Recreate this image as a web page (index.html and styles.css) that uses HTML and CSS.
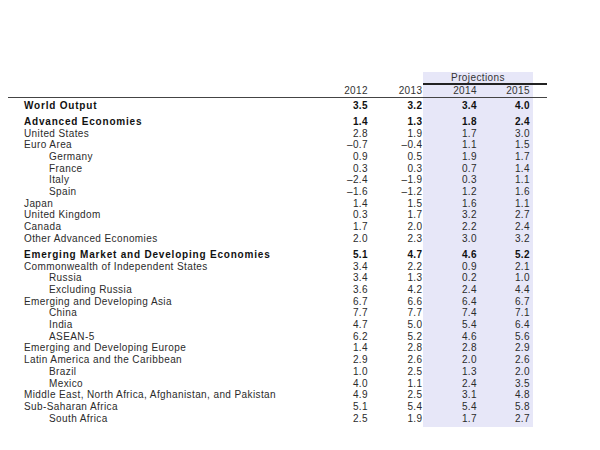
FILE: index.html
```html
<!DOCTYPE html>
<html lang="en">
<head>
<meta charset="utf-8">
<title>World Economic Outlook Projections</title>
<link rel="stylesheet" href="styles.css">
</head>
<body>
<div class="page">
<table class="weo">
  <colgroup>
    <col class="c-label"><col class="c-y12"><col class="c-y13"><col class="c-y14"><col class="c-y15"><col class="c-tail">
  </colgroup>
  <thead>
    <tr class="h-proj">
      <th></th><th></th><th></th>
      <th colspan="2" class="proj shade">Projections</th>
      <th class="proj-tail"></th>
    </tr>
    <tr class="h-years">
      <th></th>
      <th class="num y12">2012</th>
      <th class="num y13">2013</th>
      <th class="num y14 shade">2014</th>
      <th class="num y15 shade">2015</th>
      <th></th>
    </tr>
  </thead>
  <tbody>
    <tr class="bold first"><td class="lab">World Output</td><td class="num y12">3.5</td><td class="num y13">3.2</td><td class="num y14 shade">3.4</td><td class="num y15 shade">4.0</td><td></td></tr>
    <tr class="bold gap"><td class="lab">Advanced Economies</td><td class="num y12">1.4</td><td class="num y13">1.3</td><td class="num y14 shade">1.8</td><td class="num y15 shade">2.4</td><td></td></tr>
    <tr><td class="lab">United States</td><td class="num y12">2.8</td><td class="num y13">1.9</td><td class="num y14 shade">1.7</td><td class="num y15 shade">3.0</td><td></td></tr>
    <tr><td class="lab">Euro Area</td><td class="num y12">&ndash;0.7</td><td class="num y13">&ndash;0.4</td><td class="num y14 shade">1.1</td><td class="num y15 shade">1.5</td><td></td></tr>
    <tr><td class="lab sub">Germany</td><td class="num y12">0.9</td><td class="num y13">0.5</td><td class="num y14 shade">1.9</td><td class="num y15 shade">1.7</td><td></td></tr>
    <tr><td class="lab sub">France</td><td class="num y12">0.3</td><td class="num y13">0.3</td><td class="num y14 shade">0.7</td><td class="num y15 shade">1.4</td><td></td></tr>
    <tr><td class="lab sub">Italy</td><td class="num y12">&ndash;2.4</td><td class="num y13">&ndash;1.9</td><td class="num y14 shade">0.3</td><td class="num y15 shade">1.1</td><td></td></tr>
    <tr><td class="lab sub">Spain</td><td class="num y12">&ndash;1.6</td><td class="num y13">&ndash;1.2</td><td class="num y14 shade">1.2</td><td class="num y15 shade">1.6</td><td></td></tr>
    <tr><td class="lab">Japan</td><td class="num y12">1.4</td><td class="num y13">1.5</td><td class="num y14 shade">1.6</td><td class="num y15 shade">1.1</td><td></td></tr>
    <tr><td class="lab">United Kingdom</td><td class="num y12">0.3</td><td class="num y13">1.7</td><td class="num y14 shade">3.2</td><td class="num y15 shade">2.7</td><td></td></tr>
    <tr><td class="lab">Canada</td><td class="num y12">1.7</td><td class="num y13">2.0</td><td class="num y14 shade">2.2</td><td class="num y15 shade">2.4</td><td></td></tr>
    <tr><td class="lab">Other Advanced Economies</td><td class="num y12">2.0</td><td class="num y13">2.3</td><td class="num y14 shade">3.0</td><td class="num y15 shade">3.2</td><td></td></tr>
    <tr class="bold gap"><td class="lab">Emerging Market and Developing Economies</td><td class="num y12">5.1</td><td class="num y13">4.7</td><td class="num y14 shade">4.6</td><td class="num y15 shade">5.2</td><td></td></tr>
    <tr><td class="lab">Commonwealth of Independent States</td><td class="num y12">3.4</td><td class="num y13">2.2</td><td class="num y14 shade">0.9</td><td class="num y15 shade">2.1</td><td></td></tr>
    <tr><td class="lab sub">Russia</td><td class="num y12">3.4</td><td class="num y13">1.3</td><td class="num y14 shade">0.2</td><td class="num y15 shade">1.0</td><td></td></tr>
    <tr><td class="lab sub">Excluding Russia</td><td class="num y12">3.6</td><td class="num y13">4.2</td><td class="num y14 shade">2.4</td><td class="num y15 shade">4.4</td><td></td></tr>
    <tr><td class="lab">Emerging and Developing Asia</td><td class="num y12">6.7</td><td class="num y13">6.6</td><td class="num y14 shade">6.4</td><td class="num y15 shade">6.7</td><td></td></tr>
    <tr><td class="lab sub">China</td><td class="num y12">7.7</td><td class="num y13">7.7</td><td class="num y14 shade">7.4</td><td class="num y15 shade">7.1</td><td></td></tr>
    <tr><td class="lab sub">India</td><td class="num y12">4.7</td><td class="num y13">5.0</td><td class="num y14 shade">5.4</td><td class="num y15 shade">6.4</td><td></td></tr>
    <tr><td class="lab sub">ASEAN-5</td><td class="num y12">6.2</td><td class="num y13">5.2</td><td class="num y14 shade">4.6</td><td class="num y15 shade">5.6</td><td></td></tr>
    <tr><td class="lab">Emerging and Developing Europe</td><td class="num y12">1.4</td><td class="num y13">2.8</td><td class="num y14 shade">2.8</td><td class="num y15 shade">2.9</td><td></td></tr>
    <tr><td class="lab">Latin America and the Caribbean</td><td class="num y12">2.9</td><td class="num y13">2.6</td><td class="num y14 shade">2.0</td><td class="num y15 shade">2.6</td><td></td></tr>
    <tr><td class="lab sub">Brazil</td><td class="num y12">1.0</td><td class="num y13">2.5</td><td class="num y14 shade">1.3</td><td class="num y15 shade">2.0</td><td></td></tr>
    <tr><td class="lab sub">Mexico</td><td class="num y12">4.0</td><td class="num y13">1.1</td><td class="num y14 shade">2.4</td><td class="num y15 shade">3.5</td><td></td></tr>
    <tr><td class="lab">Middle East, North Africa, Afghanistan, and Pakistan</td><td class="num y12">4.9</td><td class="num y13">2.5</td><td class="num y14 shade">3.1</td><td class="num y15 shade">4.8</td><td></td></tr>
    <tr><td class="lab">Sub-Saharan Africa</td><td class="num y12">5.1</td><td class="num y13">5.4</td><td class="num y14 shade">5.4</td><td class="num y15 shade">5.8</td><td></td></tr>
    <tr><td class="lab sub">South Africa</td><td class="num y12">2.5</td><td class="num y13">1.9</td><td class="num y14 shade">1.7</td><td class="num y15 shade">2.7</td><td></td></tr>
    <tr class="foot"><td></td><td></td><td></td><td class="shade"></td><td class="shade"></td><td></td></tr>
  </tbody>
</table>
</div>
</body>
</html>
```

FILE: styles.css
```css
html, body {
  margin: 0;
  padding: 0;
  background: #ffffff;
}

.page {
  padding: 72px 0 0 8px;
}

.weo {
  border-collapse: collapse;
  border-spacing: 0;
  table-layout: fixed;
  width: 539px;
  font-family: "Liberation Sans", Arial, Helvetica, sans-serif;
  font-size: 10px;
  letter-spacing: 0.4px;
  color: #2b2b2b;
}

.c-label { width: 308px; }
.c-y12 { width: 54px; }
.c-y13 { width: 53px; }
.c-y14 { width: 55px; }
.c-y15 { width: 55px; }
.c-tail { width: 14px; }

.weo th,
.weo td {
  padding: 0;
  line-height: 11.67px;
  font-weight: normal;
  white-space: nowrap;
  text-align: left;
}

.shade {
  background: #e7e7f8;
}

.h-proj th {
  line-height: 11px;
}

.weo .proj {
  text-align: center;
  border-bottom: 2px solid #222222;
  color: #333333;
}

.proj-tail {
  border-bottom: 2px solid #222222;
}

.h-years th {
  border-bottom: 1px solid #444444;
  color: #333333;
}

.weo .num {
  text-align: right;
}

.weo .y12 { padding-right: 2px; }
.weo .y13 { padding-right: 0.5px; }
.weo .y14 { padding-right: 1px; }
.weo .y15 { padding-right: 3px; }

.weo .lab {
  padding-left: 16px;
}

.weo .lab.sub {
  padding-left: 41px;
}

.bold td {
  font-weight: bold;
  color: #111111;
  letter-spacing: 0.8px;
}

.bold td.num {
  letter-spacing: 0.4px;
}

.first td {
  padding-top: 2px;
}

.gap td {
  padding-top: 4.7px;
}

.foot td {
  height: 3px;
  line-height: 3px;
}
```
